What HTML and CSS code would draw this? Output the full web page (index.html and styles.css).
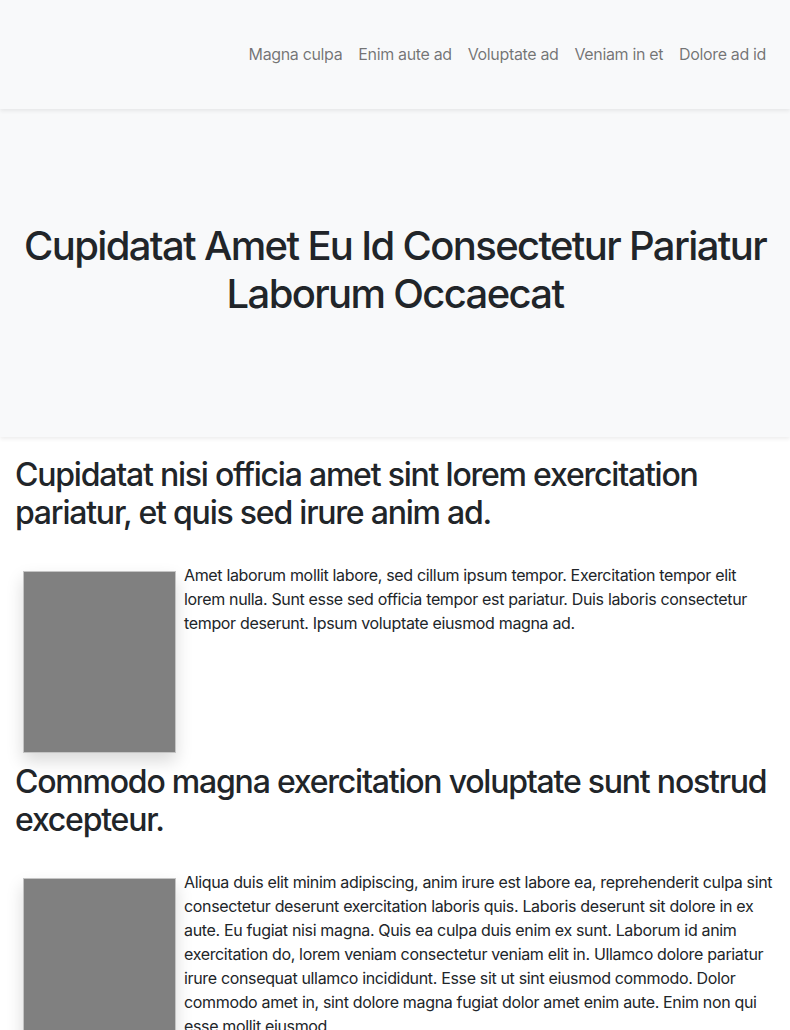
FILE: index.html
```html
<!DOCTYPE html>
<html lang="en">
<head>
<meta charset="utf-8">
<title>Cupidatat Amet</title>
<link rel="stylesheet" href="styles.css">
</head>
<body>
<nav class="navbar">
  <ul class="nav">
    <li><a href="#">Magna culpa</a></li>
    <li><a href="#">Enim aute ad</a></li>
    <li><a href="#">Voluptate ad</a></li>
    <li><a href="#">Veniam in et</a></li>
    <li><a href="#">Dolore ad id</a></li>
  </ul>
</nav>
<header class="hero">
  <h1>Cupidatat Amet Eu Id Consectetur Pariatur Laborum Occaecat</h1>
</header>
<main class="content">
  <section class="article">
    <h2>Cupidatat nisi officia amet sint lorem exercitation pariatur, et quis sed irure anim ad.</h2>
    <div class="row">
      <div class="thumb"></div>
      <p>Amet laborum mollit labore, sed cillum ipsum tempor. Exercitation tempor elit lorem nulla. Sunt esse sed officia tempor est pariatur. Duis laboris consectetur tempor deserunt. Ipsum voluptate eiusmod magna ad.</p>
    </div>
  </section>
  <section class="article">
    <h2>Commodo magna exercitation voluptate sunt nostrud excepteur.</h2>
    <div class="row">
      <div class="thumb"></div>
      <p>Aliqua duis elit minim adipiscing, anim irure est labore ea, reprehenderit culpa sint consectetur deserunt exercitation laboris quis. Laboris deserunt sit dolore in ex aute. Eu fugiat nisi magna. Quis ea culpa duis enim ex sunt. Laborum id anim exercitation do, lorem veniam consectetur veniam elit in. Ullamco dolore pariatur irure consequat ullamco incididunt. Esse sit ut sint eiusmod commodo. Dolor commodo amet in, sint dolore magna fugiat dolor amet enim aute. Enim non qui esse mollit eiusmod.</p>
    </div>
  </section>
</main>
</body>
</html>
```
FILE: styles.css
```css
* { box-sizing: border-box; }
html, body { margin: 0; padding: 0; }
body {
  font-family: Inter, "Noto Sans", "Liberation Sans", sans-serif;
  font-size: 16px;
  line-height: 1.5;
  letter-spacing: -0.34px;
  color: #212529;
  background: #fff;
}
.navbar {
  position: relative;
  z-index: 2;
  height: 109px;
  background: #f8f9fa;
  box-shadow: 0 2px 4px rgba(0,0,0,.075);
  display: flex;
  align-items: center;
  justify-content: flex-end;
  padding: 0 16px 2px 16px;
}
.nav {
  list-style: none;
  margin: 0;
  padding: 0;
  display: flex;
}
.nav a {
  display: block;
  padding: 8px 8px;
  color: rgba(0,0,0,.55);
  text-decoration: none;
  letter-spacing: -0.35px;
}
.hero {
  position: relative;
  z-index: 1;
  background: #f8f9fa;
  box-shadow: 0 2px 4px rgba(0,0,0,.075);
  padding: 113px 16px 111px;
  text-align: center;
}
.hero h1 {
  margin: 0 0 8px;
  font-size: 40px;
  font-weight: 500;
  line-height: 1.2;
  letter-spacing: -1.65px;
}
.content {
  padding: 19px 15px 0;
}
.article + .article {
  margin-top: 2px;
}
.article h2 {
  margin: 0 0 30px;
  font-size: 32px;
  font-weight: 500;
  line-height: 1.2;
  letter-spacing: -1.22px;
}
.row {
  display: flex;
  align-items: flex-start;
}
.thumb {
  flex: 0 0 153px;
  height: 182px;
  margin: 8px;
  background: #808080;
  border: 1px solid #c4c4c4;
  box-shadow: 0 8px 16px rgba(0,0,0,.15);
}
.row p {
  margin: 0 0 16px;
}
```
